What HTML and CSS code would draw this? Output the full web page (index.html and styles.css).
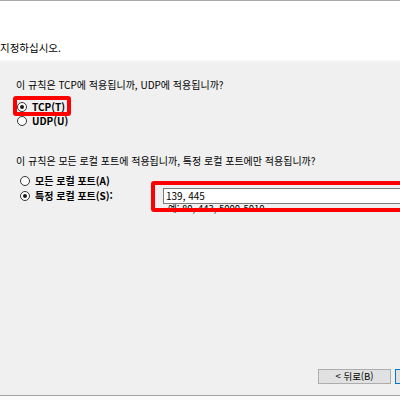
FILE: index.html
```html
<!DOCTYPE html>
<html lang="ko">
<head>
<meta charset="utf-8">
<link rel="stylesheet" href="styles.css">
</head>
<body>
<div class="page">
  <div class="top">
    <div class="ghost"><span class="g g1">프로</span><span class="g g2">토콜</span><span class="g g3">규칙이 적용되는 프로토콜과 포트를</span></div>
    <div class="instr">지정하십시오.</div>
  </div>
  <div class="main">
    <div class="q q1">이 규칙은 TCP에 적용됩니까, UDP에 적용됩니까?</div>
    <div class="group proto">
      <div class="opt"><span class="radio on"></span><span class="lbl">TCP(T)</span></div>
      <div class="opt"><span class="radio"></span><span class="lbl">UDP(U)</span></div>
      <div class="mark mark1"></div>
    </div>
    <div class="q q2">이 규칙은 모든 로컬 포트에 적용됩니까, 특정 로컬 포트에만 적용됩니까?</div>
    <div class="group ports">
      <div class="opt"><span class="radio"></span><span class="lbl">모든 로컬 포트(A)</span></div>
      <div class="portrow">
        <div class="opt opt-s"><span class="radio on"></span><span class="lbl">특정 로컬 포트(S):</span></div>
        <div class="field">
          <div class="input">139, 445</div>
          <div class="hint">예: 80, 443, 5000-5010</div>
        </div>
      </div>
      <div class="mark mark2"></div>
    </div>
  </div>
  <div class="footer">
    <div class="buttons">
      <div class="btn">&lt; 뒤로(B)</div>
      <div class="btn primary">다음(N) &gt;</div>
    </div>
  </div>
  <div class="bottom"></div>
</div>
</body>
</html>
```
FILE: styles.css
```css
html, body {
  margin: 0;
  padding: 0;
}
body {
  width: 400px;
  height: 400px;
  overflow: hidden;
  background: #f0f0f0;
  font-family: "Noto Sans CJK KR", "Noto Sans", sans-serif;
  font-size: 10px;
  color: #000;
}
.page {
  width: 400px;
  height: 400px;
  display: flex;
  flex-direction: column;
}
.top {
  background: #fff;
  height: 62px;
  border-top: 1px solid #a8a8a8;
  border-bottom: 2px solid #f7f7f7;
  box-sizing: border-box;
}
.ghost {
  height: 5px;
  overflow: hidden;
  display: flex;
  padding-left: 202px;
  color: #8a8a8a;
  font-size: 10px;
  line-height: 14px;
  white-space: nowrap;
}
.g {
  display: block;
  overflow: hidden;
  flex: none;
  transform: translateY(-8px);
}
.g1 { width: 11px; }
.g2 { width: 11px; margin-left: 34px; }
.g3 { width: 97px; margin-left: 22px; }
.instr {
  margin-top: 36px;
  line-height: 12px;
  font-size: 10.5px;
}
.main {
  flex: 1;
  padding-left: 16px;
}
.q {
  line-height: 14px;
  white-space: nowrap;
}
.q1 { margin-top: 16px; }
.q2 { margin-top: 26px; }
.group {
  position: relative;
}
.proto {
  margin-top: 8px;
  padding-left: 1px;
}
.ports {
  margin-top: 6px;
  padding-left: 4px;
}
.opt {
  display: flex;
  align-items: center;
  height: 14px;
  gap: 5px;
  white-space: nowrap;
}
.opt-s {
  height: 15px;
}
.lbl {
  font-weight: 700;
  line-height: 14px;
}
.radio {
  width: 10px;
  height: 10px;
  border: 1px solid #333;
  border-radius: 50%;
  background: #fff;
  box-sizing: border-box;
  position: relative;
  flex: none;
}
.radio.on::after {
  content: "";
  position: absolute;
  left: 2px;
  top: 2px;
  width: 4px;
  height: 4px;
  border-radius: 50%;
  background: #1a1a1a;
}
.portrow {
  display: grid;
  grid-template-columns: 143px 1fr;
  align-items: start;
}
.input {
  height: 16px;
  box-sizing: border-box;
  border: 1px solid #7a7a7a;
  border-right: none;
  background: #fff;
  line-height: 14px;
  padding-left: 2px;
  width: 300px;
}
.hint {
  line-height: 9px;
  padding-left: 5px;
  white-space: nowrap;
  font-size: 9.5px;
}
.mark {
  position: absolute;
  border: 4px solid #ff0000;
  border-radius: 3px;
  box-sizing: border-box;
}
.mark1 {
  left: -3px;
  top: -4px;
  width: 58px;
  height: 20px;
}
.mark2 {
  left: 135px;
  top: 7px;
  width: 300px;
  height: 31px;
}
.footer {
  height: 26px;
  overflow: hidden;
}
.buttons {
  display: flex;
  gap: 4px;
  padding-left: 318px;
  width: 600px;
}
.btn {
  width: 73px;
  height: 15px;
  box-sizing: border-box;
  border: 1px solid #adadad;
  background: #e1e1e1;
  text-align: center;
  line-height: 13px;
  font-size: 9.5px;
  flex: none;
}
.btn.primary {
  border-color: #0078d7;
}
.bottom {
  height: 4px;
  border-top: 1px solid #a0a0a0;
  background: #fafafa;
}
```
